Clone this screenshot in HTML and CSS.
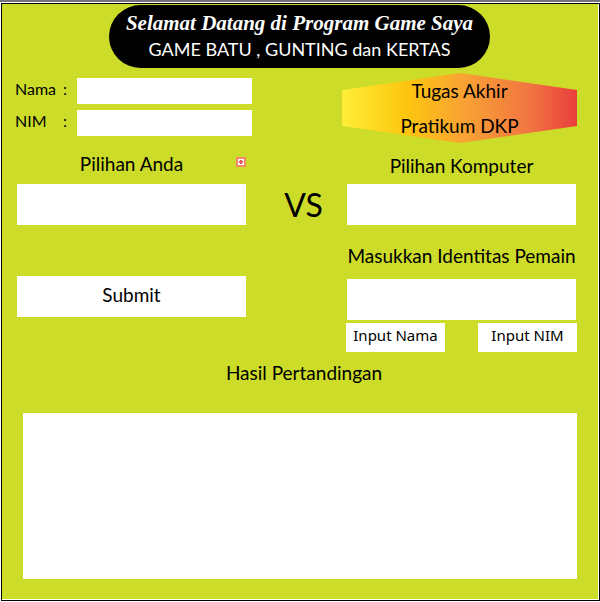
FILE: index.html
```html
<!DOCTYPE html>
<html lang="id">
<head>
<meta charset="utf-8">
<meta name="viewport" content="width=device-width, initial-scale=1">
<title>Game Batu, Gunting dan Kertas</title>
<link rel="stylesheet" href="styles.css">
</head>
<body>
<div class="frame">
  <header class="banner">
    <p class="welcome">Selamat Datang di Program Game Saya</p>
    <h1 class="title">GAME BATU , GUNTING dan KERTAS</h1>
  </header>

  <section class="top">
    <div class="player">
      <label class="player-label" for="nama"><span>Nama</span><span>:</span></label>
      <input class="field" id="nama" type="text">
      <label class="player-label" for="nim"><span>NIM</span><span>:</span></label>
      <input class="field" id="nim" type="text">
    </div>
    <div class="badge">
      <svg class="badge-shape" viewBox="0 0 235 70" preserveAspectRatio="none" aria-hidden="true">
        <defs>
          <linearGradient id="warm">
            <stop offset="0" stop-color="#ffee38"/>
            <stop offset="0.27" stop-color="#fdc60e"/>
            <stop offset="0.52" stop-color="#f9a234"/>
            <stop offset="0.8" stop-color="#f17541"/>
            <stop offset="1" stop-color="#e93e3b"/>
          </linearGradient>
        </defs>
        <polygon points="0,17 118,0 235,17 235,53 118,70 0,53" fill="url(#warm)"/>
      </svg>
      <p class="badge-text">Tugas Akhir<br>Pratikum DKP</p>
    </div>
  </section>

  <main class="play">
    <div class="column">
      <label class="heading with-mark" for="anda">Pilihan Anda
        <svg class="mark" viewBox="0 0 10 10" aria-hidden="true">
          <rect x="1" y="1" width="8" height="8" fill="#fffafa" stroke="#f58a68" stroke-width="2"/>
          <path d="M5 3v4M3 5h4" stroke="#ef5b62" stroke-width="2"/>
        </svg>
      </label>
      <input class="field" id="anda" type="text">
      <button class="submit" type="button">Submit</button>
    </div>
    <p class="versus">VS</p>
    <div class="column">
      <label class="heading computer" for="komputer">Pilihan Komputer</label>
      <input class="field" id="komputer" type="text">
      <label class="heading identity" for="identitas">Masukkan Identitas Pemain</label>
      <input class="field" id="identitas" type="text">
      <div class="actions">
        <button class="action" type="button">Input Nama</button>
        <button class="action" type="button">Input NIM</button>
      </div>
    </div>
  </main>

  <section class="result">
    <label class="heading" for="hasil">Hasil Pertandingan</label>
    <textarea class="result-box" id="hasil"></textarea>
  </section>
</div>
</body>
</html>
```
FILE: styles.css
```css
* {
  box-sizing: border-box;
}

body {
  margin: 0;
  padding: 1px 0 1px 1px;
  border-top: 2px solid #74717c;
  background: #fff;
  color: #000;
  font-family: Chiller, Lato, sans-serif;
}

p,
h1 {
  margin: 0;
  font-weight: 400;
}

input,
button,
textarea {
  display: block;
  width: 100%;
  margin: 0;
  border: 0;
  border-radius: 0;
  background: #fff;
  color: #000;
  font-family: inherit;
}

.frame {
  min-height: calc(100vh - 4px);
  border: 1px solid #000;
  background: #cddc28;
  box-shadow: inset -1px -1px #fff;
  padding: 1px 2px 20px 0;
}

.banner {
  width: 64%;
  margin: 0 auto;
  padding: 5px 0 6px;
  border-radius: 32px;
  background: #000;
  color: #fff;
  text-align: center;
  white-space: nowrap;
}

.welcome {
  font: italic 700 21px/26px "Harlow Solid Italic", "Liberation Serif", serif;
}

.title {
  font-size: 18px;
  line-height: 26px;
}

.top {
  display: flex;
  justify-content: space-between;
  align-items: flex-start;
  padding: 5px 20px 0 13px;
}

.player {
  display: grid;
  grid-template-columns: 52px 175px;
  grid-auto-rows: 26px;
  gap: 6px 10px;
  padding-top: 5px;
}

.player-label {
  display: flex;
  justify-content: space-between;
  font-size: 16px;
  line-height: 22px;
}

.player .field {
  height: 26px;
}

.badge {
  display: grid;
  width: 235px;
  height: 70px;
}

.badge-shape,
.badge-text {
  grid-area: 1 / 1;
}

.badge-shape {
  width: 100%;
  height: 70px;
}

.badge-text {
  font-size: 19px;
  line-height: 35px;
  text-align: center;
}

.play {
  display: grid;
  grid-template-columns: minmax(0, 229fr) minmax(0, 101fr) minmax(0, 229fr);
  padding: 0 21px 0 15px;
}

.heading {
  display: block;
  font-size: 19px;
  line-height: 41px;
  text-align: center;
  white-space: nowrap;
}

.with-mark {
  position: relative;
}

.mark {
  position: absolute;
  top: 14px;
  right: 0;
  width: 10px;
  height: 10px;
}

.computer {
  padding-top: 4px;
  line-height: 37px;
}

.column .field,
.submit {
  height: 41px;
}

.submit {
  margin-top: 51px;
  padding: 0 0 4px;
  font-size: 19px;
}

.versus {
  padding: 41px 0 0 14px;
  font-size: 32px;
  line-height: 41px;
  text-align: center;
}

.identity {
  padding: 10px 0 3px;
}

.actions {
  display: flex;
  justify-content: space-between;
  margin: 0 -1px;
  padding-top: 3px;
}

.action {
  width: 99px;
  height: 29px;
  padding: 0 0 6px;
  font: 15px/22px "Myriad Pro", "Noto Sans", sans-serif;
  white-space: nowrap;
}

.result {
  padding: 0 20px 0 21px;
}

.result .heading {
  padding: 0 0 20px 8px;
}

.result-box {
  height: 166px;
  resize: none;
}
```
